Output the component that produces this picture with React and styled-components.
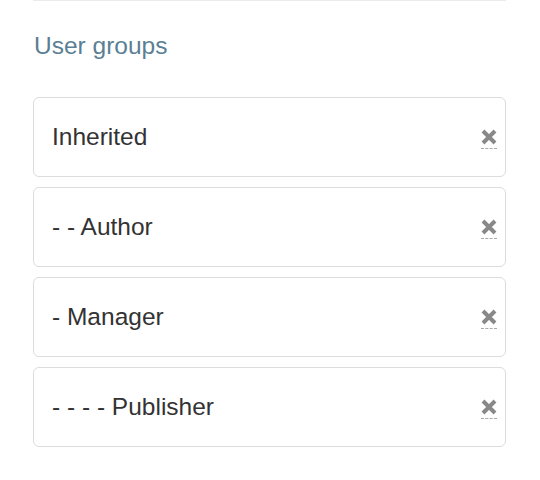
import React from "react";
import styled, { createGlobalStyle } from "styled-components";

const GlobalStyle = createGlobalStyle`
  body {
    margin: 0;
    background: #fff;
    font-family: "Liberation Sans", Arial, sans-serif;
  }
`;

const groups = ["Inherited", "- - Author", "- Manager", "- - - - Publisher"];

const RemoveIcon = () => (
  <svg width="16" height="16" viewBox="0 0 16 16">
    <path d="M2 2 L14 14 M14 2 L2 14" stroke="#888" strokeWidth="4" strokeLinecap="butt" />
  </svg>
);

const App = () => (
  <>
    <GlobalStyle />
    <Panel>
      <Rule />
      <Title>User groups</Title>
      <List>
        {groups.map((name) => (
          <Row key={name}>
            <span>{name}</span>
            <Remove title="Remove">
              <RemoveIcon />
            </Remove>
          </Row>
        ))}
      </List>
    </Panel>
  </>
);

const Panel = styled.div`
  padding: 0 34px 0 33px;
`;

const Rule = styled.div`
  height: 1px;
  background: #ebebeb;
`;

const Title = styled.h3`
  margin: 31px 0 0 1px;
  font-size: 24.5px;
  font-weight: normal;
  line-height: 28px;
  color: #5a7f94;
`;

const List = styled.div`
  margin-top: 37px;
  display: flex;
  flex-direction: column;
  gap: 10px;
`;

const Row = styled.div`
  height: 78px;
  border: 1px solid #dcdcdc;
  border-radius: 6px;
  display: flex;
  align-items: center;
  justify-content: space-between;
  padding: 0 8px 0 18px;
  font-size: 24.5px;
  color: #333;
`;

const Remove = styled.abbr`
  display: flex;
  margin-top: 4px;
  padding-bottom: 3px;
  border-bottom: 1px dashed #aaa;
  cursor: pointer;
`;

export default App;
